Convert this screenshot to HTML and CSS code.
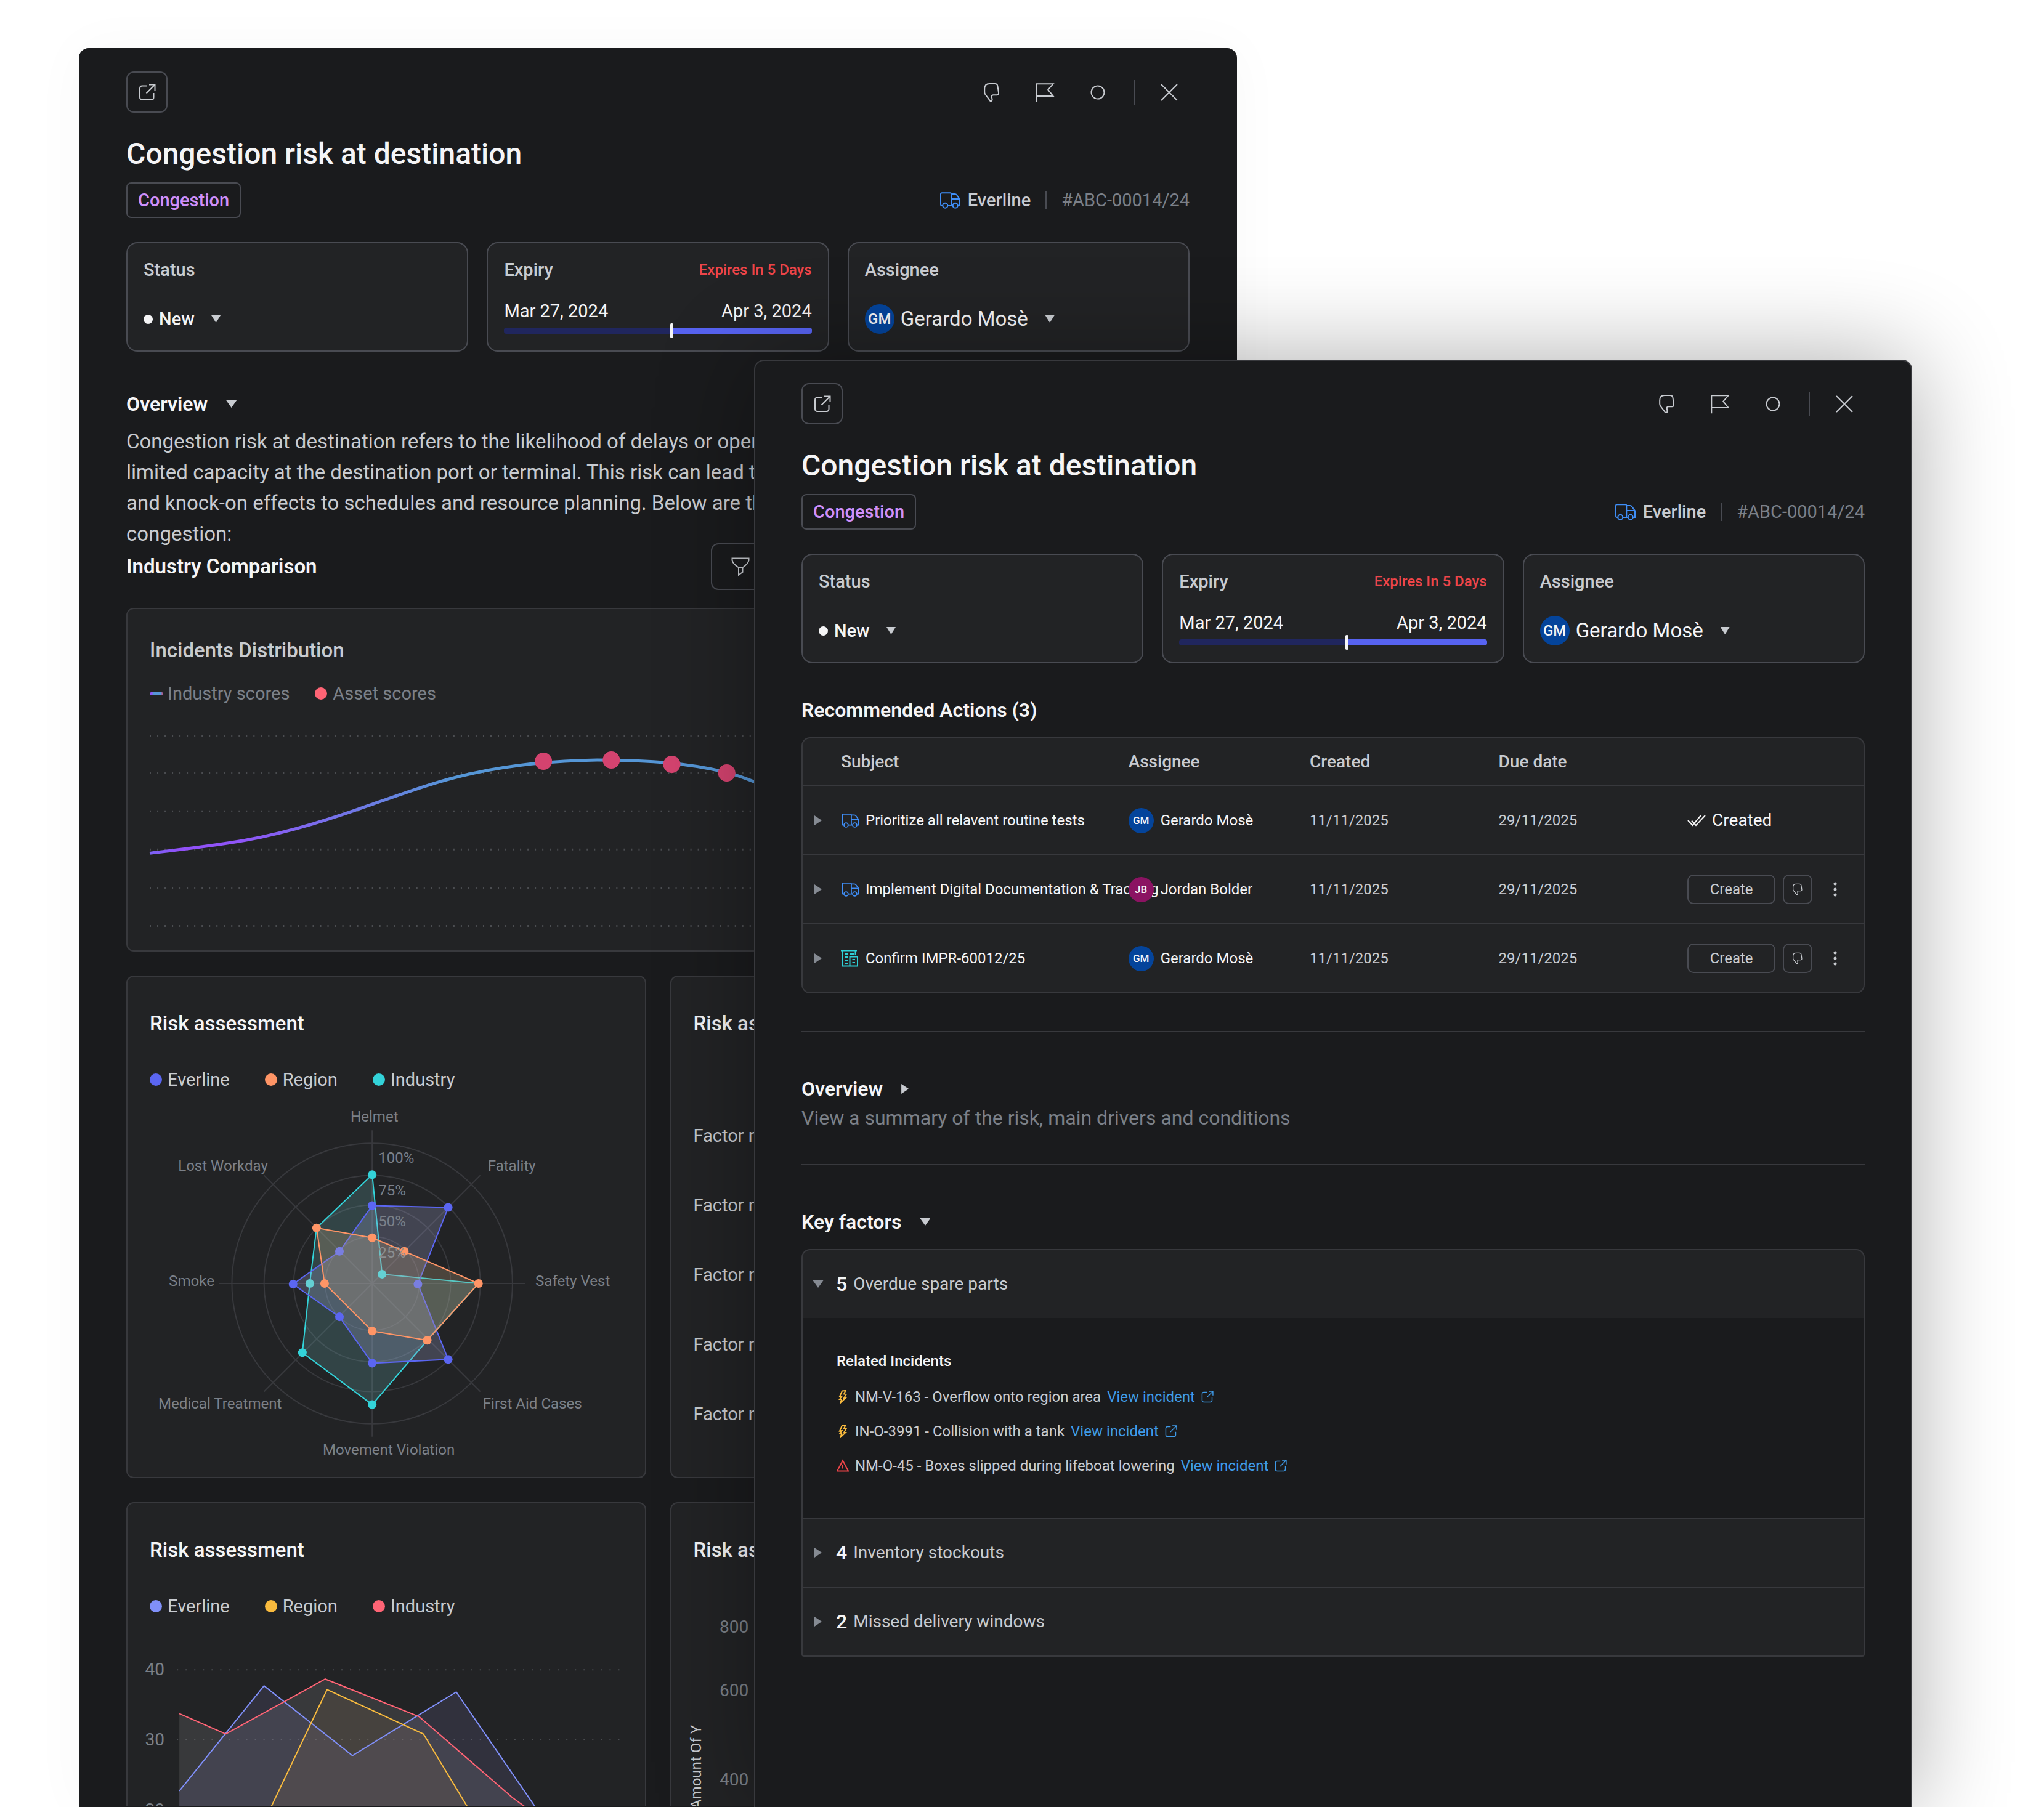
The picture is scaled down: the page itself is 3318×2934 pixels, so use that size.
FILE: index.html
```html
<!DOCTYPE html>
<html lang="en">
<head>
    <meta charset="UTF-8">
    <meta name="viewport" content="width=device-width, initial-scale=1.0">
    <title>Congestion risk at destination</title>
    <link rel="stylesheet" href="styles.css">
</head>
<body>
    <!-- icon sprite -->
    <svg class="sprite" aria-hidden="true">
        <symbol id="i-open" viewBox="0 0 28 28"><path d="M13 3.5H6Q2 3.5 2 7.5V22Q2 26 6 26H20.5Q24.5 26 24.5 22V15M12.5 15.5L26.5 1.5M17 1.5H26.5V11"/></symbol>
        <symbol id="i-thumb" viewBox="0 0 32 32"><path d="M12 2H21Q25 2 25.5 6L27 16.5Q27.2 20.3 24 20.3H18.5Q15.5 20.3 15.8 23L16.6 28Q16 30.5 13.5 30L5.2 19Q4.2 17.5 4.2 15.5V10Q4.2 2 12 2Z"/></symbol>
        <symbol id="i-flag" viewBox="0 0 32 32"><path d="M2.3 31.3V2.3H29.5L21.3 11.7L29.5 22H2.3"/></symbol>
        <symbol id="i-circle" viewBox="0 0 32 32"><circle cx="16" cy="16" r="10.5"/></symbol>
        <symbol id="i-close" viewBox="0 0 32 32"><path d="M3 3L29 29M29 3L3 29"/></symbol>
        <symbol id="i-truck" viewBox="0 0 34 28"><path d="M5.3 23H4Q2 23 2 21V4.3Q2 2.3 4 2.3H17.3Q19.3 2.3 19.3 4.3V23M13.3 23H21.7M29.7 23H33V12.3L28 5.5Q27 4 25 4H19.3M19.3 12H33"/><circle cx="9.3" cy="22.7" r="4"/><circle cx="25.7" cy="22.7" r="4"/></symbol>
        <symbol id="i-building" viewBox="0 0 28 28"><path d="M0 1.5H26M2.5 1.5V26.5H27V11.5H14.5V26.5M23.5 1.5V8M6 7H12M15 7H21M6 12H11.5M6 17H11.5M6 22H11.5M18.5 16H23M18.5 21H23"/></symbol>
        <symbol id="i-filter" viewBox="0 0 30 30"><path d="M1.5 1.5H28.5V5Q27 11 18.5 16.5V24L12 28.5V16.5Q3 11 1.5 5ZM12 16.5H18.5"/></symbol>
        <symbol id="i-checks" viewBox="0 0 30 20"><path d="M1 10L8.5 18L22 2M7 10.5L14 18L29 2"/></symbol>
        <symbol id="i-bolt" viewBox="0 0 20 22"><path d="M9 1.5L14.5 1L12 6.5L15.5 7L12 13H14.5L6.5 20.5L8 15H5L8.5 10L5 10.5Z"/></symbol>
        <symbol id="i-warn" viewBox="0 0 20 20"><path d="M10 1.5L19 18.5H1ZM10 8V13M10 14.5V16"/></symbol>
        <symbol id="i-dots" viewBox="0 0 6 24"><circle cx="3" cy="3" r="2.5"/><circle cx="3" cy="12" r="2.5"/><circle cx="3" cy="21" r="2.5"/></symbol>
    </svg>

    <main class="stage">
        <!-- back panel -->
        <section class="panel panel-back">
            <div class="topbar">
                <button class="icon-box" aria-label="Open in new window"><svg class="i28"><use href="#i-open"/></svg></button>
                <div class="tools">
                    <button aria-label="Not helpful"><svg class="i32"><use href="#i-thumb"/></svg></button>
                    <button aria-label="Flag"><svg class="i32"><use href="#i-flag"/></svg></button>
                    <button aria-label="Mark"><svg class="i32"><use href="#i-circle"/></svg></button>
                    <span class="sep tall"></span>
                    <button aria-label="Close"><svg class="i32"><use href="#i-close"/></svg></button>
                </div>
            </div>
            <h1>Congestion risk at destination</h1>
            <div class="meta">
                <span class="tag">Congestion</span>
                <div class="asset">
                    <svg class="truck"><use href="#i-truck"/></svg>
                    <strong>Everline</strong>
                    <span class="sep"></span>
                    <span class="ref">#ABC-00014/24</span>
                </div>
            </div>
            <div class="cards">
                <div class="card">
                    <label for="status1">Status</label>
                    <div class="pick status">
                        <span class="dot"></span>
                        <select id="status1"><option>New</option></select>
                        <span class="caret down"></span>
                    </div>
                </div>
                <div class="card">
                    <div class="row"><span>Expiry</span><span class="expires">Expires In 5 Days</span></div>
                    <div class="row dates"><span>Mar 27, 2024</span><span>Apr 3, 2024</span></div>
                    <div class="bar"><span class="elapsed" style="width: 54%"></span><span class="knob"></span><span class="remaining"></span></div>
                </div>
                <div class="card">
                    <label for="assignee1">Assignee</label>
                    <div class="pick person">
                        <span class="avatar">GM</span>
                        <select id="assignee1"><option>Gerardo Mosè</option></select>
                        <span class="caret down"></span>
                    </div>
                </div>
            </div>

            <h2 class="overview"><button class="toggle">Overview <span class="caret big down"></span></button></h2>
            <p class="text">Congestion risk at destination refers to the likelihood of delays or operational disruption caused by high traffic or<br>
                limited capacity at the destination port or terminal. This risk can lead to longer waiting times, added costs<br>
                and knock-on effects to schedules and resource planning. Below are the main factors that drive the level of<br>
                congestion:</p>
            <div class="compare">
                <h2>Industry Comparison</h2>
                <button class="filter" aria-label="Filter"><svg class="i30"><use href="#i-filter"/></svg></button>
            </div>

            <article class="chart-card wide">
                <h3>Incidents Distribution</h3>
                <ul class="legend">
                    <li><span class="dash"></span>Industry scores</li>
                    <li><span class="key rose"></span>Asset scores</li>
                </ul>
                <svg class="chart" viewBox="0 0 1647 332">
                    <defs>
                        <linearGradient id="score" gradientUnits="userSpaceOnUse" x1="0" y1="0" x2="1647" y2="0">
                            <stop offset="0" stop-color="#7c62f5"/>
                            <stop offset=".03" stop-color="#9150f8"/>
                            <stop offset=".09" stop-color="#8f55f8"/>
                            <stop offset=".3" stop-color="#5596d6"/>
                            <stop offset="1" stop-color="#5596d6"/>
                        </linearGradient>
                    </defs>
                    <path class="dotted" d="M0 13H1647M0 73H1647M0 135H1647M0 197H1647M0 259H1647M0 321H1647"/>
                    <path class="score-line" d="M0 203C52 197 104 191 155 182C221 170 290 149 354 126C411 106 468 85 526 73C592 59 659 53 725 52C795 52 865 55 935 72C1010 92 1100 150 1200 185L1647 260"/>
                    <g class="score-dots">
                        <circle cx="638" cy="54" r="14"/>
                        <circle cx="748" cy="52" r="14"/>
                        <circle cx="846" cy="59" r="14"/>
                        <circle cx="935" cy="73" r="14"/>
                    </g>
                </svg>
            </article>

            <div class="chart-grid">
                <article class="chart-card">
                    <h3>Risk assessment</h3>
                    <ul class="legend bright">
                        <li><span class="key indigo"></span>Everline</li>
                        <li><span class="key orange"></span>Region</li>
                        <li><span class="key teal"></span>Industry</li>
                    </ul>
                    <svg class="chart radar" viewBox="-360 -295 765 590">
                        <g class="web">
                            <circle r="227"/><circle r="175"/><circle r="127"/><circle r="76"/>
                            <path d="M0 -248V248M-248 0H248M-175 -175L175 175M175 -175L-175 175"/>
                        </g>
                        <polygon class="s-industry" points="0,-176 16,-15 172,0 89,92 0,196 -113,112 -101,0 -90,-90"/>
                        <polygon class="s-everline" points="0,-126 123,-123 74,1 123,123 0,129 -53,54 -128,1 -53,-52"/>
                        <polygon class="s-region" points="0,-74 52,-52 172,0 89,92 0,77 -77,0 -90,-90"/>
                        <g class="d-everline">
                            <circle cx="0" cy="-126" r="7"/><circle cx="123" cy="-123" r="7"/><circle class="soft" cx="74" cy="1" r="7"/><circle cx="123" cy="123" r="7"/>
                            <circle cx="0" cy="129" r="7"/><circle cx="-53" cy="54" r="7"/><circle cx="-128" cy="1" r="7"/><circle class="soft" cx="-53" cy="-52" r="7"/>
                        </g>
                        <g class="d-industry">
                            <circle cx="0" cy="-176" r="7"/><circle class="soft" cx="16" cy="-15" r="7"/><circle cx="0" cy="196" r="7"/><circle cx="-113" cy="112" r="7"/><circle class="soft" cx="-101" cy="0" r="7"/>
                        </g>
                        <g class="d-region">
                            <circle cx="0" cy="-74" r="7"/><circle cx="52" cy="-52" r="7"/><circle cx="172" cy="0" r="7"/><circle cx="89" cy="92" r="7"/>
                            <circle cx="0" cy="77" r="7"/><circle cx="-77" cy="0" r="7"/><circle cx="-90" cy="-90" r="7"/>
                        </g>
                        <g class="tick">
                            <text x="10" y="-195">100%</text>
                            <text x="10" y="-143">75%</text>
                            <text x="10" y="-93">50%</text>
                            <text x="10" y="-42" class="faded">25%</text>
                            <text x="-35" y="-262">Helmet</text>
                            <text x="187" y="-182">Fatality</text>
                            <text x="264" y="4">Safety Vest</text>
                            <text x="179" y="202">First Aid Cases</text>
                            <text x="-80" y="277">Movement Violation</text>
                            <text x="-346" y="202">Medical Treatment</text>
                            <text x="-329" y="4">Smoke</text>
                            <text x="-314" y="-182">Lost Workday</text>
                        </g>
                    </svg>
                </article>
                <article class="chart-card">
                    <h3>Risk assessment</h3>
                    <ul class="factors">
                        <li>Factor name</li>
                        <li>Factor name</li>
                        <li>Factor name</li>
                        <li>Factor name</li>
                        <li>Factor name</li>
                    </ul>
                </article>
                <article class="chart-card">
                    <h3>Risk assessment</h3>
                    <ul class="legend bright">
                        <li><span class="key periwinkle"></span>Everline</li>
                        <li><span class="key amber"></span>Region</li>
                        <li><span class="key rose"></span>Industry</li>
                    </ul>
                    <svg class="chart area" viewBox="0 0 765 480">
                        <path class="dotted sparse" d="M44 47H762M44 160H762M44 274H762"/>
                        <polygon class="a-industry" points="48,480 48,118 123,151 284,62 436,123 587,254 760,380 760,480"/>
                        <polygon class="a-everline" points="48,480 48,243 185,73 328,186 496,83 626,272 720,480"/>
                        <polygon class="a-region" points="140,480 195,272 287,79 443,151 516,272 590,480"/>
                        <polyline class="l-everline" points="48,243 185,73 328,186 496,83 626,272 720,480"/>
                        <polyline class="l-region" points="140,480 195,272 287,79 443,151 516,272 590,480"/>
                        <polyline class="l-industry" points="48,118 123,151 284,62 436,123 587,254 760,380"/>
                        <g class="axis">
                            <text x="24" y="56">40</text>
                            <text x="24" y="169">30</text>
                            <text x="24" y="283">20</text>
                        </g>
                    </svg>
                </article>
                <article class="chart-card">
                    <h3>Risk assessment</h3>
                    <svg class="chart bars" viewBox="0 0 765 560">
                        <g class="axis">
                            <text x="89" y="75">800</text>
                            <text x="89" y="177">600</text>
                            <text x="89" y="322">400</text>
                        </g>
                        <text class="axis-title" transform="translate(12 360) rotate(-90)">Amount Of Y</text>
                    </svg>
                </article>
            </div>
        </section>

        <!-- front panel -->
        <section class="panel panel-front">
            <div class="topbar">
                <button class="icon-box" aria-label="Open in new window"><svg class="i28"><use href="#i-open"/></svg></button>
                <div class="tools">
                    <button aria-label="Not helpful"><svg class="i32"><use href="#i-thumb"/></svg></button>
                    <button aria-label="Flag"><svg class="i32"><use href="#i-flag"/></svg></button>
                    <button aria-label="Mark"><svg class="i32"><use href="#i-circle"/></svg></button>
                    <span class="sep tall"></span>
                    <button aria-label="Close"><svg class="i32"><use href="#i-close"/></svg></button>
                </div>
            </div>
            <h1>Congestion risk at destination</h1>
            <div class="meta">
                <span class="tag">Congestion</span>
                <div class="asset">
                    <svg class="truck"><use href="#i-truck"/></svg>
                    <strong>Everline</strong>
                    <span class="sep"></span>
                    <span class="ref">#ABC-00014/24</span>
                </div>
            </div>
            <div class="cards">
                <div class="card">
                    <label for="status2">Status</label>
                    <div class="pick status">
                        <span class="dot"></span>
                        <select id="status2"><option>New</option></select>
                        <span class="caret down"></span>
                    </div>
                </div>
                <div class="card">
                    <div class="row"><span>Expiry</span><span class="expires">Expires In 5 Days</span></div>
                    <div class="row dates"><span>Mar 27, 2024</span><span>Apr 3, 2024</span></div>
                    <div class="bar"><span class="elapsed" style="width: 54%"></span><span class="knob"></span><span class="remaining"></span></div>
                </div>
                <div class="card">
                    <label for="assignee2">Assignee</label>
                    <div class="pick person">
                        <span class="avatar">GM</span>
                        <select id="assignee2"><option>Gerardo Mosè</option></select>
                        <span class="caret down"></span>
                    </div>
                </div>
            </div>

            <h2 class="actions-title">Recommended Actions (3)</h2>
            <div class="table-box">
                <table>
                    <thead>
                        <tr>
                            <th class="c-toggle"></th>
                            <th class="c-subject">Subject</th>
                            <th class="c-assignee">Assignee</th>
                            <th class="c-date">Created</th>
                            <th class="c-date">Due date</th>
                            <th></th>
                        </tr>
                    </thead>
                    <tbody>
                        <tr>
                            <td><button class="expand" aria-label="Expand"><span class="caret right grey"></span></button></td>
                            <td><div class="cell"><svg class="truck small"><use href="#i-truck"/></svg>Prioritize all relavent routine tests</div></td>
                            <td><div class="cell who"><span class="avatar">GM</span>Gerardo Mosè</div></td>
                            <td class="date">11/11/2025</td>
                            <td class="date">29/11/2025</td>
                            <td><div class="cell done"><svg class="checks"><use href="#i-checks"/></svg>Created</div></td>
                        </tr>
                        <tr>
                            <td><button class="expand" aria-label="Expand"><span class="caret right grey"></span></button></td>
                            <td><div class="cell"><svg class="truck small"><use href="#i-truck"/></svg>Implement Digital Documentation &amp; Tracking</div></td>
                            <td><div class="cell who"><span class="avatar plum">JB</span>Jordan Bolder</div></td>
                            <td class="date">11/11/2025</td>
                            <td class="date">29/11/2025</td>
                            <td>
                                <div class="cell acts">
                                    <button class="create">Create</button>
                                    <button class="mini" aria-label="Not helpful"><svg class="i20"><use href="#i-thumb"/></svg></button>
                                    <button class="more" aria-label="More"><svg class="dots"><use href="#i-dots"/></svg></button>
                                </div>
                            </td>
                        </tr>
                        <tr>
                            <td><button class="expand" aria-label="Expand"><span class="caret right grey"></span></button></td>
                            <td><div class="cell"><svg class="building"><use href="#i-building"/></svg>Confirm IMPR-60012/25</div></td>
                            <td><div class="cell who"><span class="avatar">GM</span>Gerardo Mosè</div></td>
                            <td class="date">11/11/2025</td>
                            <td class="date">29/11/2025</td>
                            <td>
                                <div class="cell acts">
                                    <button class="create">Create</button>
                                    <button class="mini" aria-label="Not helpful"><svg class="i20"><use href="#i-thumb"/></svg></button>
                                    <button class="more" aria-label="More"><svg class="dots"><use href="#i-dots"/></svg></button>
                                </div>
                            </td>
                        </tr>
                    </tbody>
                </table>
            </div>

            <section class="block">
                <h2><button class="toggle">Overview <span class="caret big right"></span></button></h2>
                <p class="hint">View a summary of the risk, main drivers and conditions</p>
            </section>

            <section class="block">
                <h2><button class="toggle">Key factors <span class="caret big down"></span></button></h2>
                <div class="accordion">
                    <button class="item"><span class="slot"><span class="caret big down grey"></span></span><b>5</b>Overdue spare parts</button>
                    <div class="body">
                        <h4>Related Incidents</h4>
                        <ul>
                            <li><svg class="i22 yellow"><use href="#i-bolt"/></svg>NM-V-163 - Overflow onto region area<a href="#">View incident<svg class="i20"><use href="#i-open"/></svg></a></li>
                            <li><svg class="i22 yellow"><use href="#i-bolt"/></svg>IN-O-3991 - Collision with a tank<a href="#">View incident<svg class="i20"><use href="#i-open"/></svg></a></li>
                            <li><svg class="i22 red"><use href="#i-warn"/></svg>NM-O-45 - Boxes slipped during lifeboat lowering<a href="#">View incident<svg class="i20"><use href="#i-open"/></svg></a></li>
                        </ul>
                    </div>
                    <button class="item"><span class="slot"><span class="caret right grey"></span></span><b>4</b>Inventory stockouts</button>
                    <button class="item"><span class="slot"><span class="caret right grey"></span></span><b>2</b>Missed delivery windows</button>
                </div>
            </section>
        </section>
    </main>
</body>
</html>
```
FILE: styles.css
```css
* {
    box-sizing: border-box;
}
body {
    margin: 0;
    background: #fff;
    font-family: Roboto, "Liberation Sans", sans-serif;
    font-size: 28px;
    line-height: 32px;
    color: #c8cbd0;
}
h1, h2, h3, h4, p, ul {
    margin: 0;
    padding: 0;
    font-weight: 500;
}
ul {
    list-style: none;
}
button, select {
    appearance: none;
    margin: 0;
    padding: 0;
    border: none;
    background: none;
    font: inherit;
    color: inherit;
    cursor: pointer;
}
svg {
    display: block;
    flex: none;
    fill: none;
    stroke: currentColor;
    stroke-width: 2;
}
.sprite {
    position: absolute;
    width: 0;
    height: 0;
}
.i20 { width: 20px; height: 20px; }
.i22 { width: 20px; height: 22px; }
.i28 { width: 28px; height: 28px; }
.i30 { width: 30px; height: 30px; }
.i32 { width: 32px; height: 32px; }

/* panels */
.stage {
    position: relative;
    height: 100vh;
    padding-top: 78px;
    overflow: hidden;
}
.panel {
    width: 56.66%;
    padding: 36px 75px 0;
    border: 2px solid #1a1b1d;
    border-radius: 16px 16px 0 0;
    background: #1a1b1d;
    overflow: hidden;
}
.panel-back {
    height: 100%;
    margin-left: 3.86%;
    box-shadow: 0 0 90px rgba(0, 0, 0, 0.03);
}
.panel-front {
    position: absolute;
    top: 584px;
    bottom: -2px;
    left: 36.89%;
    border-color: #38393d;
    box-shadow: 0 0 160px rgba(0, 0, 0, 0.33);
}

/* panel header */
.topbar, .tools, .meta, .asset, .row, .pick, .compare {
    display: flex;
    align-items: center;
}
.topbar, .meta, .row, .compare {
    justify-content: space-between;
}
.icon-box {
    display: flex;
    align-items: center;
    justify-content: center;
    width: 67px;
    height: 67px;
    border: 2px solid #494b52;
    border-radius: 12px;
}
.tools {
    gap: 54px;
    padding-right: 17px;
}
.sep {
    width: 2px;
    height: 30px;
    background: #494b52;
}
.sep.tall {
    height: 40px;
    margin: 0 -14px 0 -12px;
}
h1 {
    margin-top: 39px;
    font-size: 48px;
    line-height: 56px;
    color: #f5f5f6;
}
.meta {
    margin-top: 18px;
    font-size: 29px;
}
.tag {
    padding: 11px 17px;
    border: 2px solid #494b52;
    border-radius: 8px;
    font-weight: 500;
    color: #cf8ffa;
}
.asset {
    gap: 12px;
}
.asset .sep {
    margin: 0 12px;
}
.asset strong {
    font-weight: 500;
}
.ref {
    color: #7b8088;
}
.truck {
    width: 34px;
    height: 28px;
    color: #3f8ef7;
}
.truck.small {
    width: 30px;
    height: 24px;
}

/* summary cards */
.cards {
    display: grid;
    grid-template-columns: repeat(3, 1fr);
    gap: 30px;
    margin-top: 39px;
}
.card {
    height: 178px;
    padding: 27px 26px;
    border: 2px solid #494b52;
    border-radius: 18px;
    background: #222325;
    font-size: 29px;
    font-weight: 500;
}
.card label {
    display: block;
}
.expires {
    font-size: 24px;
    color: #ee4549;
}
.pick {
    height: 48px;
    margin-top: 40px;
    color: #f5f5f6;
}
.dot {
    width: 15px;
    height: 15px;
    margin-right: 10px;
    border-radius: 50%;
    background: #f5f5f6;
}
.pick .caret {
    margin-left: 27px;
}
.person select {
    font-size: 33px;
    font-weight: 400;
    line-height: 40px;
}
.avatar {
    position: relative;
    display: flex;
    align-items: center;
    justify-content: center;
    width: 48px;
    height: 48px;
    margin-right: 10px;
    border-radius: 50%;
    background: #04449b;
    font-size: 24px;
    font-weight: 500;
    color: #f5f5f6;
}
.dates {
    margin-top: 35px;
    font-weight: 400;
    color: #f5f5f6;
}
.bar {
    display: flex;
    align-items: center;
    height: 24px;
    margin-top: 4px;
}
.elapsed, .remaining {
    height: 10px;
    border-radius: 4px 0 0 4px;
    background: #20265e;
}
.remaining {
    flex: 1;
    border-radius: 0 4px 4px 0;
    background: #5763f1;
}
.knob {
    width: 5px;
    height: 24px;
    border-radius: 2px;
    background: #f5f5f6;
}

/* carets */
.caret {
    display: inline-block;
    flex: none;
    background: currentColor;
    color: #c8cbd0;
}
.caret.grey { color: #858a92; }
.caret.down {
    width: 15px;
    height: 12px;
    clip-path: polygon(0 0, 100% 0, 50% 100%);
}
.caret.right {
    width: 12px;
    height: 16px;
    clip-path: polygon(0 0, 100% 50%, 0 100%);
}
.caret.down.big { width: 17px; }

h2 {
    font-size: 32px;
    font-weight: 600;
    line-height: 38px;
    color: #f5f5f6;
}
.toggle {
    display: flex;
    align-items: center;
    gap: 30px;
}
.overview {
    margin-top: 66px;
}
.text {
    margin: 17px 0 -10px;
    font-size: 33px;
    font-weight: 400;
    line-height: 50px;
    white-space: nowrap;
}
.compare h2 {
    font-size: 33px;
}
.filter {
    display: flex;
    align-items: center;
    width: 777px;
    height: 76px;
    padding-left: 31px;
    border: 2px solid #494b52;
    border-radius: 12px;
}

/* charts */
.chart-card {
    padding: 57px 36px 18px;
    border: 2px solid #38393d;
    border-radius: 12px;
    background: #222325;
}
.chart-card.wide {
    margin: 29px 0 39px;
    padding: 48px 36px 28px;
}
h3 {
    font-size: 33px;
    line-height: 38px;
    color: #f5f5f6;
}
.wide h3 {
    color: #c8cbd0;
}
.legend {
    display: flex;
    gap: 41px;
    margin-top: 35px;
    font-size: 29px;
    font-weight: 400;
    color: #7b8088;
}
.legend.bright {
    gap: 57px;
    margin-top: 56px;
    color: #c8cbd0;
}
.legend li {
    display: flex;
    align-items: center;
    gap: 9px;
}
.key {
    width: 20px;
    height: 20px;
    border-radius: 50%;
}
.dash {
    width: 22px;
    height: 5px;
    margin-right: -2px;
    border-radius: 3px;
    background: linear-gradient(90deg, #8f55f8 15%, #5596d6 30%, #5596d6 80%, #d4436f);
}
.rose { background: #ff6475; }
.indigo { background: #5b66f2; }
.orange { background: #ff9566; }
.teal { background: #33d3d9; }
.periwinkle { background: #8090fa; }
.amber { background: #f9bb3e; }
.chart {
    width: 100%;
    height: auto;
    margin-top: 40px;
    overflow: visible;
}
.chart text {
    stroke: none;
}
.radar {
    margin-top: 19px;
}
.dotted {
    stroke: #4b4d51;
    stroke-width: 3;
    stroke-dasharray: 2 10;
}
.dotted.sparse {
    stroke-width: 2;
    stroke-dasharray: 2 12;
}
.score-line {
    stroke: url(#score);
    stroke-width: 5;
}
.score-dots {
    fill: #d4436f;
    stroke: none;
}
.web {
    stroke: #38393d;
}
.s-industry { fill: rgba(98, 167, 172, 0.25); stroke: #33d3d9; }
.s-everline { fill: rgba(162, 167, 216, 0.25); stroke: #5b66f2; }
.s-region { fill: rgba(198, 167, 132, 0.25); stroke: #ff9566; }
.d-everline { fill: #5b66f2; stroke: none; }
.d-industry { fill: #33d3d9; stroke: none; }
.d-region { fill: #ff9566; stroke: none; }
.d-everline .soft { fill: #797ee0; }
.d-industry .soft { fill: #64d0d3; }
.tick {
    fill: #7b8088;
    font-size: 24px;
}
.faded { fill: #8b8e90; }
.a-industry { fill: rgba(130, 128, 128, 0.24); stroke: none; }
.a-everline { fill: rgba(120, 115, 170, 0.18); stroke: none; }
.a-region { fill: rgba(140, 110, 80, 0.18); stroke: none; }
.l-everline { stroke: #8090fa; }
.l-region { stroke: #f9bb3e; }
.l-industry { stroke: #ff6475; }
.axis {
    fill: #7b8088;
    font-size: 28px;
    text-anchor: end;
}
.axis-title {
    fill: #c8cbd0;
    font-size: 24px;
}
.chart-grid {
    display: grid;
    grid-template-columns: 1fr 1fr;
    gap: 39px;
}
.factors {
    display: grid;
    gap: 81px;
    margin-top: 147px;
}
.factors li {
    font-size: 29px;
    font-weight: 400;
}

/* recommended actions */
.actions-title {
    margin-top: 57px;
}
.table-box {
    margin: 25px 0 61px;
    border: 2px solid #38393d;
    border-radius: 14px;
    background: #222325;
}
table {
    width: 100%;
    table-layout: fixed;
    border-spacing: 0;
    white-space: nowrap;
}
th, td {
    height: 112px;
    padding: 0;
    border-bottom: 2px solid #38393d;
    font-size: 24px;
    text-align: left;
    color: #f5f5f6;
}
th {
    height: 78px;
    font-size: 28px;
    font-weight: 500;
    color: #c8cbd0;
}
tr:last-child td {
    height: 110px;
    border-bottom: none;
}
thead tr:last-child th {
    border-bottom: 2px solid #38393d;
}
.c-toggle { width: 3.6%; }
.c-subject { width: 27.1%; }
.c-assignee { width: 17.1%; }
.c-date { width: 17.8%; }
.cell {
    display: flex;
    align-items: center;
    gap: 10px;
}
td.date {
    color: #c8cbd0;
}
.expand {
    display: flex;
    padding-left: 19px;
}
.who .avatar {
    width: 41px;
    height: 41px;
    margin-right: 1px;
    font-size: 17px;
}
.avatar.plum {
    background: #8b1362;
}
.building {
    width: 28px;
    height: 28px;
    margin-right: 2px;
    color: #2fd0d6;
}
.checks {
    width: 30px;
    height: 20px;
}
.done {
    font-size: 28px;
}
.acts {
    gap: 12px;
    color: #c8cbd0;
}
.create, .mini {
    height: 48px;
    border: 2px solid #494b52;
    border-radius: 10px;
}
.create {
    width: 143px;
}
.mini {
    display: flex;
    align-items: center;
    justify-content: center;
    width: 48px;
}
.more {
    padding: 0 22px;
}
.dots {
    width: 6px;
    height: 24px;
    fill: currentColor;
    stroke: none;
}

/* collapsible blocks */
.block {
    padding: 73px 0 56px;
    border-top: 2px solid #38393d;
}
.hint {
    margin-top: 9px;
    font-size: 32px;
    font-weight: 400;
    line-height: 38px;
    color: #7b8088;
}
.accordion {
    margin-top: 25px;
    border: 2px solid #38393d;
    border-radius: 14px 14px 4px 4px;
    background: #222325;
}
.item {
    display: flex;
    align-items: center;
    width: 100%;
    height: 110px;
    padding-left: 15px;
}
.body ~ .item {
    height: 112px;
    border-top: 2px solid #38393d;
}
.slot {
    display: flex;
    justify-content: center;
    width: 20px;
    margin-right: 19px;
}
.item b {
    margin-right: 10px;
    font-size: 32px;
    font-weight: 500;
    color: #f5f5f6;
}
.body {
    padding: 56px 55px 70px;
    background: #1a1b1d;
    font-size: 24px;
    line-height: 28px;
}
h4 {
    color: #f5f5f6;
}
.body ul {
    display: grid;
    gap: 28px;
    margin-top: 30px;
    font-weight: 400;
}
.body li, .body a {
    display: flex;
    align-items: center;
    gap: 10px;
}
.body a {
    color: #3f9be8;
    text-decoration: none;
}
.yellow { color: #f9bb3e; }
.red { color: #ee4549; }
```
